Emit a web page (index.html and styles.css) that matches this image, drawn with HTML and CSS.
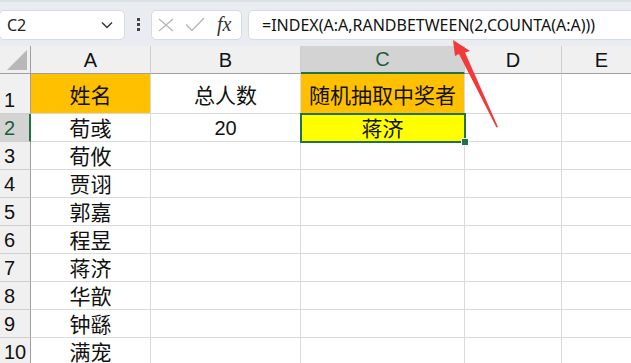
FILE: index.html
```html
<!doctype html>
<html lang="zh">
<head>
<meta charset="utf-8">
<title>随机抽取中奖者</title>
<link rel="stylesheet" href="styles.css">
</head>
<body>
<div class="toolbar">
  <div class="namebox"><span>C2</span>
    <svg class="chev" width="12" height="8" viewBox="0 0 12 8"><path d="M1 1.5 L6 6.5 L11 1.5" fill="none" stroke="#333" stroke-width="1.4"/></svg>
  </div>
  <div class="dots"><i></i><i></i><i></i></div>
  <div class="fxbox">
    <svg width="16" height="14" viewBox="0 0 16 14"><path d="M1 1 L15 13 M15 1 L1 13" stroke="#b5b5b5" stroke-width="1.3"/></svg>
    <svg width="20" height="15" viewBox="0 0 20 15"><path d="M1 7.5 L7 13.5 L19 1" fill="none" stroke="#b5b5b5" stroke-width="1.3"/></svg>
    <span class="fx">fx</span>
  </div>
  <div class="formula">=INDEX(A:A,RANDBETWEEN(2,COUNTA(A:A)))</div>
</div>

<div class="sheet">
  <div class="corner"><span></span></div>
  <div class="colhead">A</div>
  <div class="colhead">B</div>
  <div class="colhead sel">C</div>
  <div class="colhead">D</div>
  <div class="colhead">E</div>

  <div class="rowhead r1">1</div>
  <div class="cell r1 orange">姓名</div>
  <div class="cell r1">总人数</div>
  <div class="cell r1 orange">随机抽取中奖者</div>
  <div class="cell r1"></div>
  <div class="cell r1"></div>

  <div class="rowhead sel">2</div>
  <div class="cell">荀彧</div>
  <div class="cell num">20</div>
  <div class="cell active">蒋济<b class="handle"></b></div>
  <div class="cell"></div>
  <div class="cell"></div>

  <div class="rowhead">3</div><div class="cell">荀攸</div><div class="cell"></div><div class="cell"></div><div class="cell"></div><div class="cell"></div>
  <div class="rowhead">4</div><div class="cell">贾诩</div><div class="cell"></div><div class="cell"></div><div class="cell"></div><div class="cell"></div>
  <div class="rowhead">5</div><div class="cell">郭嘉</div><div class="cell"></div><div class="cell"></div><div class="cell"></div><div class="cell"></div>
  <div class="rowhead">6</div><div class="cell">程昱</div><div class="cell"></div><div class="cell"></div><div class="cell"></div><div class="cell"></div>
  <div class="rowhead">7</div><div class="cell">蒋济</div><div class="cell"></div><div class="cell"></div><div class="cell"></div><div class="cell"></div>
  <div class="rowhead">8</div><div class="cell">华歆</div><div class="cell"></div><div class="cell"></div><div class="cell"></div><div class="cell"></div>
  <div class="rowhead">9</div><div class="cell">钟繇</div><div class="cell"></div><div class="cell"></div><div class="cell"></div><div class="cell"></div>
  <div class="rowhead">10</div><div class="cell">满宠</div><div class="cell"></div><div class="cell"></div><div class="cell"></div><div class="cell"></div>
</div>

<svg class="arrow" width="631" height="363" viewBox="0 0 631 363">
  <polygon points="453,40 470,51 465,52.5 498,127 496.5,127.5 459,54 455,56" fill="#f2393b"/>
</svg>
</body>
</html>
```

FILE: styles.css
```css
* { box-sizing: border-box }
body { margin: 0; width: 631px; height: 363px; overflow: hidden; background: #fff; font-family: "Liberation Sans", "Noto Sans CJK SC", sans-serif; color: #111; position: relative }

.toolbar { height: 46px; background: #e9edf1; border-top: 2px solid #dde2e6; display: flex; align-items: center; padding-top: 1px; white-space: nowrap }
.namebox { width: 126px; height: 30px; margin-left: -1px; background: #fff; border: 1px solid #d6dbe0; border-radius: 5px; display: flex; align-items: center; justify-content: space-between; padding: 0 11px 0 7px; font-family: "Noto Sans", sans-serif; font-size: 16px; color: #222 }
.dots { width: 26px; display: flex; flex-direction: column; align-items: center; gap: 2px }
.dots i { width: 3px; height: 3px; background: #444; display: block }
.fxbox { width: 91px; height: 30px; background: #fff; border: 1px solid #d6dbe0; border-radius: 5px; display: flex; align-items: center; gap: 11px; padding-left: 6px }
.fx { font-family: "Liberation Serif", serif; font-style: italic; font-size: 20px; color: #333; margin-left: 1px }
.formula { flex: 1; height: 30px; margin-left: 6px; margin-right: -8px; background: #fff; border: 1px solid #d6dbe0; border-radius: 5px; padding-left: 13px; line-height: 28px; font-family: "Noto Sans", sans-serif; font-size: 16px; color: #111 }

.sheet { display: grid; grid-template-columns: 31px 120px 150px 164px 97px 80px; grid-template-rows: 28px 40px repeat(9, 28px); font-size: 20px }
.corner { background: #f0f0f0; border-right: 1px solid #9f9f9f; border-bottom: 1px solid #9f9f9f; position: relative }
.corner span { position: absolute; right: 3px; bottom: 3px; border-left: 20px solid transparent; border-bottom: 20px solid #b8b8b8 }
.colhead { background: #f0f0f0; border-right: 1px solid #cfcfcf; border-bottom: 1px solid #9f9f9f; display: flex; align-items: flex-end; justify-content: center; line-height: 26px; color: #111 }
.colhead.sel { background: #d3d3d3; color: #1d5c3c; border-bottom: 2px solid #217346 }
.rowhead { background: #f0f0f0; border-right: 1px solid #9f9f9f; border-bottom: 1px solid #cfcfcf; display: flex; align-items: flex-end; padding-left: 4px; line-height: 26px; color: #111 }
.rowhead.sel { background: #d3d3d3; color: #1d5c3c; border-right: 2px solid #217346 }
.cell { border-right: 1px solid #dadada; border-bottom: 1px solid #dadada; display: flex; align-items: flex-end; justify-content: center; line-height: 25px; font-size: 21px; position: relative }
.cell.num { font-size: 20px; line-height: 26px }
.cell.r1 { line-height: 35px }
.orange { background: #ffc000 }
.active { background: #ffff00; outline: 2px solid #217346; outline-offset: -1px; z-index: 2 }
.handle { position: absolute; right: -4px; bottom: -4px; width: 6px; height: 6px; background: #217346; outline: 1px solid #fff }

.arrow { position: absolute; left: 0; top: 0; pointer-events: none; z-index: 5 }
```
